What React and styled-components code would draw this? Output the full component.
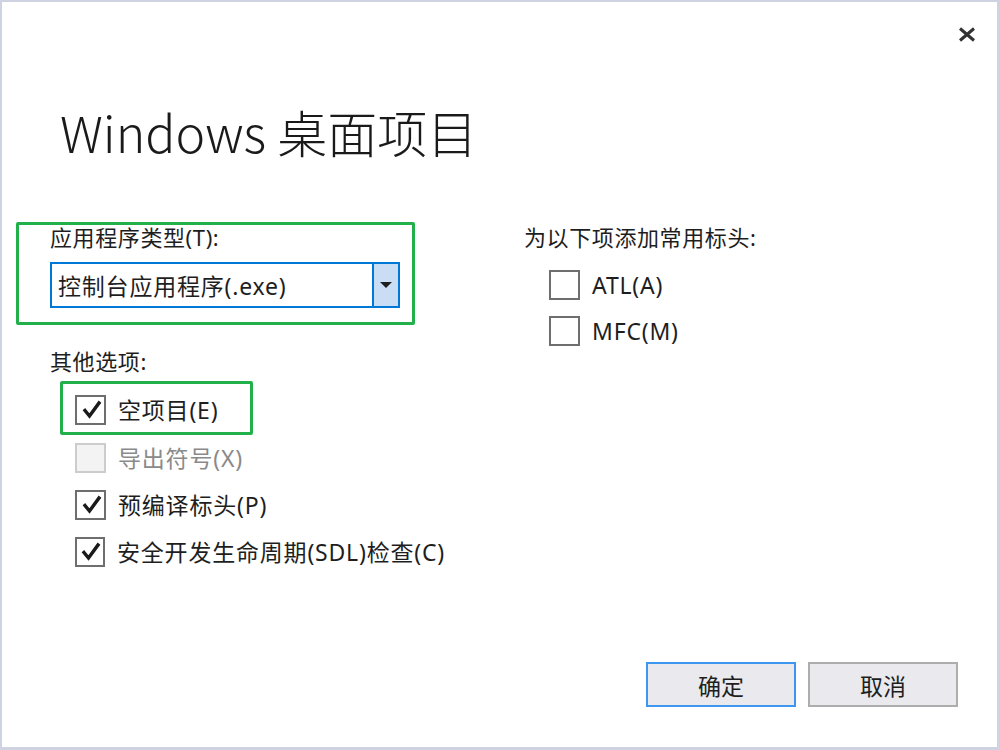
import React from 'react';
import styled, { createGlobalStyle } from 'styled-components';

const GlobalStyle = createGlobalStyle`
    html, body {
        margin: 0;
        padding: 0;
        background: #ffffff;
    }
    body {
        font-family: "Noto Sans", "Noto Sans CJK SC", sans-serif;
        color: #1e1e1e;
    }
`;

const CheckIcon = () => (
    <svg width="26" height="26" viewBox="0 0 26 26">
        <path d="M7 13.5 L11.5 19 L21 6" fill="none" stroke="#1a1a1a" strokeWidth="3.4" strokeLinecap="square" strokeLinejoin="miter" />
    </svg>
);

const CheckRow = function CheckRow({ label, checked, disabled, indent }) {
    return (
        <Row indent={indent}>
            <Box disabled={disabled}>{checked && <CheckIcon />}</Box>
            <RowLabel disabled={disabled}>{label}</RowLabel>
        </Row>
    );
};

const App = function App() {
    return (
        <Window>
            <GlobalStyle />
            <TitleBar>
                <CloseButton aria-label="关闭">
                    <svg width="18" height="15" viewBox="0 0 18 15">
                        <path d="M2 1.5 L16 13.5 M16 1.5 L2 13.5" stroke="#333" strokeWidth="3" />
                    </svg>
                </CloseButton>
            </TitleBar>
            <Title>Windows 桌面项目</Title>

            <Body>
                <LeftColumn>
                    <TypeBox>
                        <Label>应用程序类型(T):</Label>
                        <Select>
                            <SelectText>控制台应用程序(.exe)</SelectText>
                            <DropButton>
                                <svg width="12" height="7" viewBox="0 0 12 7">
                                    <path d="M0 0 L12 0 L6 6 Z" fill="#1e1e1e" />
                                </svg>
                            </DropButton>
                        </Select>
                    </TypeBox>

                    <OtherLabel>其他选项:</OtherLabel>
                    <EmptyBox>
                        <CheckRow label="空项目(E)" checked />
                    </EmptyBox>
                    <Options>
                        <CheckRow label="导出符号(X)" disabled indent />
                        <CheckRow label="预编译标头(P)" checked indent />
                        <CheckRow label="安全开发生命周期(SDL)检查(C)" checked indent />
                    </Options>
                </LeftColumn>

                <RightColumn>
                    <Label>为以下项添加常用标头:</Label>
                    <HeaderOptions>
                        <CheckRow label="ATL(A)" />
                        <CheckRow label="MFC(M)" />
                    </HeaderOptions>
                </RightColumn>
            </Body>

            <Footer>
                <Button primary>确定</Button>
                <Button>取消</Button>
            </Footer>
        </Window>
    );
};

const Window = styled.div`
    box-sizing: border-box;
    width: 1000px;
    height: 750px;
    display: flex;
    flex-direction: column;
    background: #ffffff;
    border-style: solid;
    border-color: #cfd2e1;
    border-width: 2px 3px 3px 2px;
`;
const TitleBar = styled.div`
    display: flex;
    justify-content: flex-end;
    padding: 17px 15px 0 0;
`;
const CloseButton = styled.div`
    width: 30px;
    height: 30px;
    display: flex;
    align-items: center;
    justify-content: center;
`;
const Title = styled.h1`
    margin: 52px 0 0 58px;
    font-family: "Noto Sans CJK SC", "Noto Sans", sans-serif;
    font-size: 50px;
    font-weight: 300;
    line-height: 60px;
    color: #1a1a1a;
`;
const Body = styled.div`
    display: flex;
    margin-top: 61px;
    padding-left: 14px;
`;
const LeftColumn = styled.div`
    width: 399px;
    display: flex;
    flex-direction: column;
`;
const RightColumn = styled.div`
    margin-left: 109px;
    display: flex;
    flex-direction: column;
    padding-top: 3px;
`;
const Label = styled.div`
    font-size: 22px;
    line-height: 24px;
    letter-spacing: 0.6px;
    color: #1e1e1e;
`;
const TypeBox = styled.div`
    box-sizing: border-box;
    width: 399px;
    height: 103px;
    border: 3px solid #22b04b;
    border-radius: 2px;
    padding: 0 0 0 31px;
    display: flex;
    flex-direction: column;
    gap: 13px;
`;
const Select = styled.div`
    box-sizing: border-box;
    width: 350px;
    height: 46px;
    border: 2px solid #0078d7;
    display: flex;
    align-items: stretch;
`;
const SelectText = styled.div`
    flex: 1;
    display: flex;
    align-items: center;
    padding-left: 6px;
    font-size: 23px;
    letter-spacing: 0.8px;
    color: #1e1e1e;
`;
const DropButton = styled.div`
    width: 24px;
    background: #c9ddf4;
    border-left: 2px solid #0078d7;
    display: flex;
    align-items: center;
    justify-content: center;
`;
const OtherLabel = styled(Label)`
    margin: 24px 0 0 34px;
`;
const EmptyBox = styled.div`
    box-sizing: border-box;
    width: 193px;
    height: 54px;
    margin: 8px 0 0 44px;
    border: 3px solid #22b04b;
    border-radius: 2px;
    padding: 11px 0 0 12px;
`;
const Options = styled.div`
    display: flex;
    flex-direction: column;
    gap: 17px;
    margin-top: 8px;
`;
const HeaderOptions = styled.div`
    display: flex;
    flex-direction: column;
    gap: 16px;
    margin-top: 21px;
    padding-left: 25px;
`;
const Row = styled.div`
    display: flex;
    align-items: center;
    gap: 12px;
    height: 30px;
    margin-left: ${(p) => (p.indent ? '59px' : '0')};
`;
const Box = styled.div`
    box-sizing: border-box;
    width: 31px;
    height: 30px;
    border: 2px solid ${(p) => (p.disabled ? '#cccccc' : '#6e6e6e')};
    background: ${(p) => (p.disabled ? '#f3f3f3' : '#ffffff')};
    display: flex;
    align-items: center;
    justify-content: center;
`;
const RowLabel = styled.span`
    font-size: 23px;
    line-height: 30px;
    letter-spacing: 0.8px;
    color: ${(p) => (p.disabled ? '#8a8a8a' : '#1e1e1e')};
    white-space: nowrap;
`;
const Footer = styled.div`
    margin-top: auto;
    display: flex;
    justify-content: flex-end;
    gap: 12px;
    padding: 0 39px 40px 0;
`;
const Button = styled.div`
    box-sizing: border-box;
    width: 150px;
    height: 45px;
    display: flex;
    align-items: center;
    justify-content: center;
    background: #e9e9ee;
    border: 2px solid ${(p) => (p.primary ? '#3d97f1' : '#adadad')};
    font-size: 23px;
    color: #1e1e1e;
`;

export default App;
